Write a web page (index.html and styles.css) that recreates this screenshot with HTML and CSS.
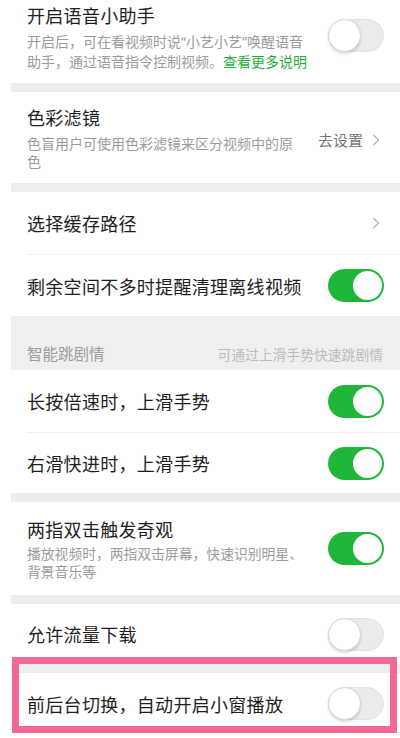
FILE: index.html
```html
<!DOCTYPE html>
<html lang="zh-CN">
<head>
<meta charset="utf-8">
<title>设置</title>
<link rel="stylesheet" href="styles.css">
</head>
<body>
<div class="page">
  <div class="row row-a">
    <div class="text">
      <div class="title">开启语音小助手</div>
      <div class="sub">开启后，可在看视频时说<span class="q">“</span>小艺小艺<span class="q">”</span>唤醒语音<br>助手，通过语音指令控制视频。<span class="link">查看更多说明</span></div>
    </div>
    <div class="sw off sw-a"></div>
  </div>
  <div class="band"></div>

  <div class="row row-b">
    <div class="text">
      <div class="title">色彩滤镜</div>
      <div class="sub">色盲用户可使用色彩滤镜来区分视频中的原<br>色</div>
    </div>
    <div class="action">
      <span class="action-label">去设置</span>
      <svg class="chev" width="7" height="12" viewBox="0 0 7 12"><path d="M1 1.5 L5.5 6 L1 10.5" fill="none" stroke="#b4b4b4" stroke-width="1.4" stroke-linecap="round" stroke-linejoin="round"/></svg>
    </div>
  </div>
  <div class="band"></div>

  <div class="row row-single r62">
    <div class="text"><div class="title">选择缓存路径</div></div>
    <svg class="chev" width="7" height="12" viewBox="0 0 7 12"><path d="M1 1.5 L5.5 6 L1 10.5" fill="none" stroke="#b4b4b4" stroke-width="1.4" stroke-linecap="round" stroke-linejoin="round"/></svg>
  </div>
  <div class="divider"></div>
  <div class="row row-single r61">
    <div class="text"><div class="title">剩余空间不多时提醒清理离线视频</div></div>
    <div class="sw on"></div>
  </div>

  <div class="section-head">
    <span class="sh-title">智能跳剧情</span>
    <span class="sh-note">可通过上滑手势快速跳剧情</span>
  </div>

  <div class="row row-single r62">
    <div class="text"><div class="title">长按倍速时，上滑手势</div></div>
    <div class="sw on"></div>
  </div>
  <div class="divider"></div>
  <div class="row row-single r60">
    <div class="text"><div class="title">右滑快进时，上滑手势</div></div>
    <div class="sw on"></div>
  </div>
  <div class="band"></div>

  <div class="row row-g">
    <div class="text">
      <div class="title">两指双击触发奇观</div>
      <div class="sub tight">播放视频时，两指双击屏幕，快速识别明星、<br>背景音乐等</div>
    </div>
    <div class="sw on"></div>
  </div>
  <div class="band"></div>

  <div class="row row-single r60">
    <div class="text"><div class="title">允许流量下载</div></div>
    <div class="sw off"></div>
  </div>

  <div class="highlight">
    <div class="band"></div>
    <div class="row row-single r61">
      <div class="text"><div class="title">前后台切换，自动开启小窗播放</div></div>
      <div class="sw off"></div>
    </div>
    <div class="mark"></div>
  </div>
</div>
</body>
</html>
```
FILE: styles.css
```css
html, body {
  margin: 0;
  padding: 0;
  background: #ffffff;
}
body {
  font-family: "Noto Sans CJK SC", "Noto Sans", sans-serif;
  color: #1e1e1e;
  width: 400px;
  height: 738px;
  overflow: hidden;
}
.page {
  margin-left: 11px;
  width: 389px;
}
.row {
  display: flex;
  align-items: center;
  padding: 0 16px 0 16px;
  box-sizing: border-box;
}
.text {
  flex: 1;
  min-width: 0;
}
.title {
  font-size: 18px;
  line-height: 24px;
  letter-spacing: 0.3px;
  white-space: nowrap;
}
.sub {
  margin-top: 5px;
  font-size: 14px;
  line-height: 18.5px;
  color: #9b9b9b;
  white-space: nowrap;
}
.sub.tight {
  margin-top: 3px;
  font-size: 13.8px;
}
.q {
  font-family: "Noto Sans", sans-serif;
}
.link {
  color: #1fb137;
}
.row-a {
  height: 83px;
  padding-top: 3px;
  padding-bottom: 13px;
}
.sw-a {
  margin-bottom: 2px;
}
.row-b {
  height: 91px;
}
.row-g {
  height: 93px;
}
.r60 { height: 60px; }
.r61 { height: 61px; }
.r62 { height: 62px; }

.band {
  height: 9px;
  background: #eeeeee;
}
.divider {
  height: 1px;
  margin-left: 16px;
  background: #f0f0f0;
}
.action {
  display: flex;
  align-items: center;
  gap: 10px;
  margin-top: 5px;
  margin-right: 4px;
}
.action-label {
  font-size: 15px;
  color: #777777;
  line-height: 20px;
}
.chev {
  flex: none;
  display: block;
}
.row-single .chev {
  margin-right: 4px;
}

.section-head {
  height: 54px;
  background: #efefef;
  display: flex;
  align-items: flex-end;
  justify-content: space-between;
  padding: 0 17px 5px 16px;
  box-sizing: border-box;
}
.sh-title {
  font-size: 15.5px;
  line-height: 24px;
  color: #9d9d9d;
}
.sh-note {
  font-size: 13.8px;
  line-height: 22px;
  color: #bcbcbc;
}

.sw {
  flex: none;
  position: relative;
  width: 56px;
  height: 33px;
  border-radius: 17px;
  box-sizing: border-box;
}
.sw.off {
  background: #ebebeb;
  border: 1px solid #e2e2e2;
}
.sw.off::after {
  content: "";
  position: absolute;
  left: -1px;
  top: -1px;
  width: 33px;
  height: 33px;
  border-radius: 50%;
  background: #ffffff;
  border: 1px solid #d6d6d6;
  box-sizing: border-box;
  box-shadow: 0 2px 3px rgba(0, 0, 0, 0.14);
}
.sw.on {
  background: #1fb63a;
}
.sw.on::after {
  content: "";
  position: absolute;
  right: 2px;
  top: 2px;
  width: 29px;
  height: 29px;
  border-radius: 50%;
  background: #ffffff;
}

.highlight {
  position: relative;
}
.mark {
  position: absolute;
  top: -7px;
  left: 1px;
  right: 3px;
  bottom: 1px;
  border: 7px solid #f26893;
  box-sizing: border-box;
}
```
